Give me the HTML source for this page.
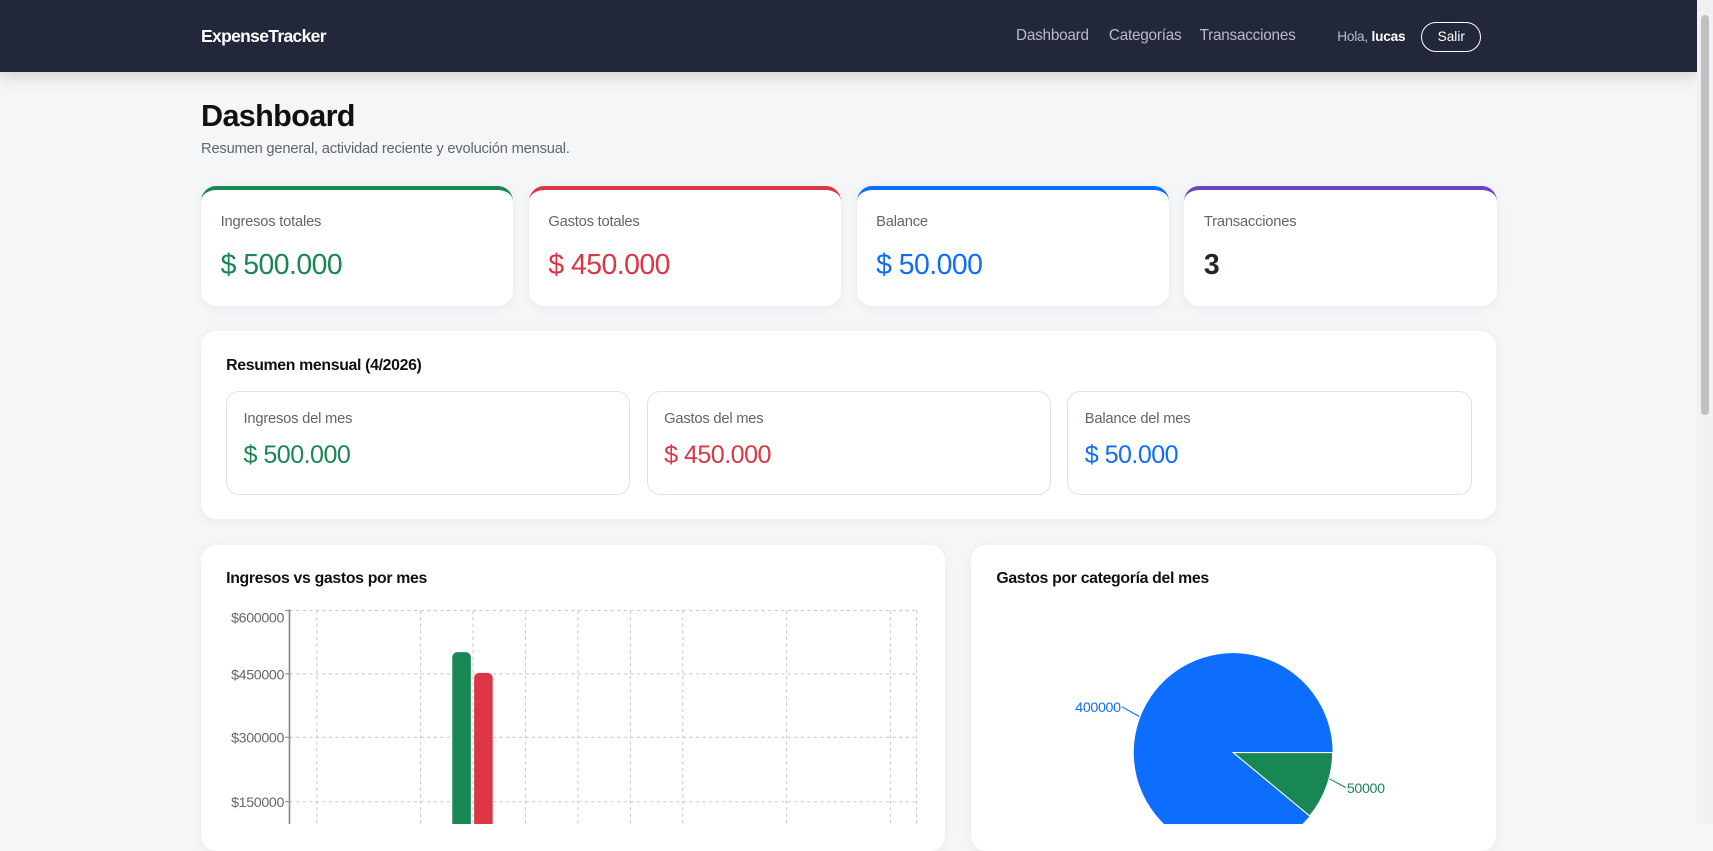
<!DOCTYPE html>
<html><head><meta charset="utf-8"><style>
html,body{margin:0;padding:0}
body{zoom:1.0925;width:1568px;height:754px;overflow:hidden;background:#f5f6f8;font-family:"Liberation Sans",sans-serif;position:relative}
.nav{position:absolute;left:0;top:0;width:1553px;height:66px;background:#222739;box-shadow:0 4px 14px rgba(0,0,0,.15)}
.logo{position:absolute;left:184px;top:24px;color:#fff;font-weight:bold;font-size:16px;letter-spacing:-0.6px}
.nl{position:absolute;top:25px;color:#b8bcc6;font-size:14px;letter-spacing:-0.2px}
.sb{position:absolute;right:0;top:0;width:15px;height:754px;background:#f1f1f1}
.sb div{position:absolute;left:4px;top:14px;width:7px;height:366px;background:#c1c1c1;border-radius:4px}
.card{position:absolute;background:#fff;border-radius:14px;box-shadow:0 2px 10px rgba(0,0,0,.05)}
.k{position:absolute;top:170px;width:286px;height:110px;border-top:4px solid;box-sizing:border-box}
.lab{position:absolute;left:18px;top:22px;font-size:13.5px;color:#5f6670;letter-spacing:-0.2px}
.val{position:absolute;left:18px;top:54px;font-size:26px;letter-spacing:-0.5px}
.in{position:absolute;top:55px;width:370px;height:95px;border:1px solid #dee2e6;border-radius:12px;box-sizing:border-box}
.in .lab{left:15px;top:17px}.in .val{left:15px;top:45px;font-size:23px}
h3{position:absolute;margin:0;font-size:14.5px;color:#111;font-weight:bold;letter-spacing:-0.3px}
</style></head><body>
<div class="nav">
<div class="logo">ExpenseTracker</div>
<div class="nl" style="left:930px">Dashboard</div>
<div class="nl" style="left:1015px">Categorías</div>
<div class="nl" style="left:1098px">Transacciones</div>
<div class="nl" style="left:1224px;top:27px;font-size:12.5px">Hola, <b style="color:#fff">lucas</b></div>
<div style="position:absolute;left:1301px;top:20px;width:53px;height:26px;border:1px solid #fff;border-radius:14px;color:#fff;font-size:12.5px;text-align:center;line-height:26px">Salir</div>
</div>
<div class="sb"><div></div></div>
<div style="position:absolute;left:184px;top:91px;font-size:28px;font-weight:bold;color:#111;letter-spacing:-0.6px">Dashboard</div>
<div style="position:absolute;left:184px;top:129px;font-size:13.5px;color:#5f6670;letter-spacing:-0.2px">Resumen general, actividad reciente y evolución mensual.</div>

<div class="card k" style="left:184px;border-color:#198754"><div class="lab">Ingresos totales</div><div class="val" style="color:#198754">$ 500.000</div></div>
<div class="card k" style="left:484px;border-color:#dc3545"><div class="lab">Gastos totales</div><div class="val" style="color:#dc3545">$ 450.000</div></div>
<div class="card k" style="left:784px;border-color:#0d6efd"><div class="lab">Balance</div><div class="val" style="color:#0d6efd">$ 50.000</div></div>
<div class="card k" style="left:1084px;border-color:#6f42c1"><div class="lab">Transacciones</div><div class="val" style="color:#212529;font-weight:bold">3</div></div>

<div class="card" style="left:184px;top:303px;width:1185px;height:172px">
<h3 style="left:23px;top:24px">Resumen mensual (4/2026)</h3>
<div class="in" style="left:23px"><div class="lab">Ingresos del mes</div><div class="val" style="color:#198754">$ 500.000</div></div>
<div class="in" style="left:408px"><div class="lab">Gastos del mes</div><div class="val" style="color:#dc3545">$ 450.000</div></div>
<div class="in" style="left:793px"><div class="lab">Balance del mes</div><div class="val" style="color:#0d6efd">$ 50.000</div></div>
</div>

<div class="card" style="left:184px;top:499px;width:681px;height:280px">
<h3 style="left:23px;top:23px">Ingresos vs gastos por mes</h3>
</div>
<svg style="position:absolute;left:184px;top:499px" width="681" height="255" font-family="Liberation Sans" font-size="13" fill="#666">
<g stroke="#ccc" stroke-dasharray="3,3">
<line x1="81" y1="60" x2="655" y2="60"/><line x1="81" y1="118" x2="655" y2="118"/><line x1="81" y1="176" x2="655" y2="176"/><line x1="81" y1="235" x2="655" y2="235"/>
<line x1="106" y1="60" x2="106" y2="260"/><line x1="201" y1="60" x2="201" y2="260"/><line x1="249" y1="60" x2="249" y2="260"/><line x1="297" y1="60" x2="297" y2="260"/><line x1="345" y1="60" x2="345" y2="260"/><line x1="393" y1="60" x2="393" y2="260"/><line x1="441" y1="60" x2="441" y2="260"/><line x1="536" y1="60" x2="536" y2="260"/><line x1="631" y1="60" x2="631" y2="260"/><line x1="655" y1="60" x2="655" y2="260"/>
</g>
<line x1="81" y1="59" x2="81" y2="260" stroke="#888" stroke-width="1.5"/>
<g stroke="#888"><line x1="77" y1="60" x2="81" y2="60"/><line x1="77" y1="118" x2="81" y2="118"/><line x1="77" y1="176" x2="81" y2="176"/><line x1="77" y1="235" x2="81" y2="235"/></g>
<g text-anchor="end" letter-spacing="-0.3"><text x="76" y="71">$600000</text><text x="76" y="123">$450000</text><text x="76" y="181">$300000</text><text x="76" y="240">$150000</text></g>
<rect x="230" y="98" width="17" height="170" rx="5" fill="#198754"/>
<rect x="250" y="117" width="17" height="150" rx="5" fill="#dc3545"/>
</svg>

<div class="card" style="left:889px;top:499px;width:480px;height:280px">
<h3 style="left:23px;top:23px">Gastos por categoría del mes</h3>
</div>
<svg style="position:absolute;left:889px;top:499px" width="480" height="255" font-family="Liberation Sans" font-size="13" letter-spacing="-0.3">
<circle cx="240" cy="190" r="91" fill="#0d6efd"/>
<path d="M240 190 L331 190 A91 91 0 0 1 310 248 Z" fill="#198754" stroke="#fff" stroke-width="1"/>
<polyline points="138,148 154,157" stroke="#0d6efd" fill="none"/>
<text x="137" y="153" text-anchor="end" fill="#0d6efd">400000</text>
<polyline points="328,214 343,222" stroke="#198754" fill="none"/>
<text x="344" y="227" fill="#198754">50000</text>
</svg>
</body></html>
